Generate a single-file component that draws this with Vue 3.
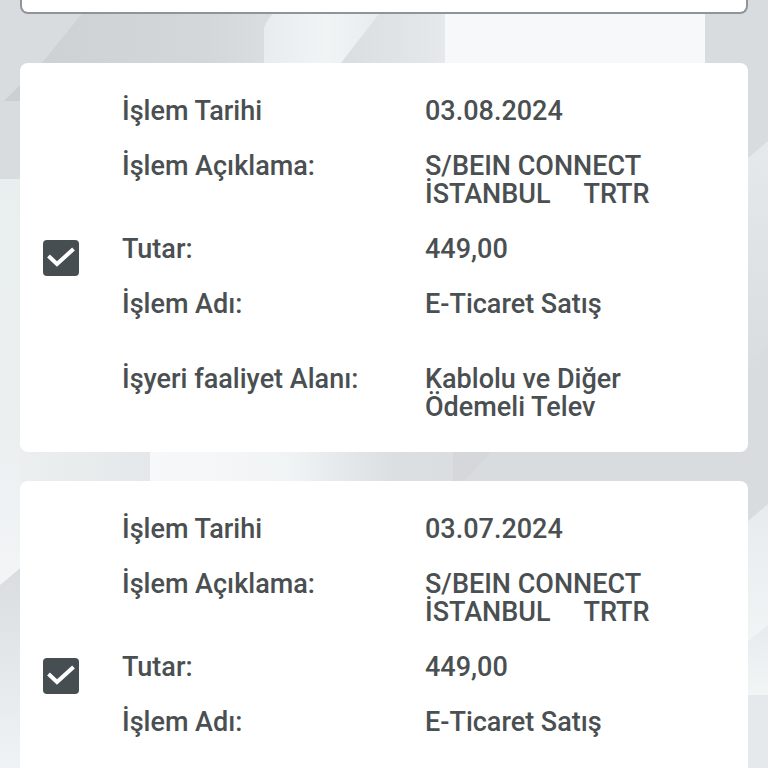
<script setup>
const records = [
  {
    id: 'august',
    rows: [
      { label: 'İşlem Tarihi', value: '03.08.2024' },
      { label: 'İşlem Açıklama:', value: 'S/BEIN CONNECT\nİSTANBUL     TRTR' },
      { label: 'Tutar:', value: '449,00' },
      { label: 'İşlem Adı:', value: 'E-Ticaret Satış' },
      { label: 'İşyeri faaliyet Alanı:', value: 'Kablolu ve Diğer\nÖdemeli Telev', spaced: true },
    ],
  },
  {
    id: 'july',
    rows: [
      { label: 'İşlem Tarihi', value: '03.07.2024' },
      { label: 'İşlem Açıklama:', value: 'S/BEIN CONNECT\nİSTANBUL     TRTR' },
      { label: 'Tutar:', value: '449,00' },
      { label: 'İşlem Adı:', value: 'E-Ticaret Satış' },
    ],
  },
]
</script>

<template>
  <main class="page">
    <svg class="backdrop" viewBox="0 0 768 768" preserveAspectRatio="none" aria-hidden="true">
      <defs>
        <linearGradient id="band" x1="0" x2="1">
          <stop offset="0" stop-color="#cdd1d3" />
          <stop offset="0.75" stop-color="#d3d7d9" />
          <stop offset="1" stop-color="#dadddf" />
        </linearGradient>
        <linearGradient id="fold" x1="0" x2="1">
          <stop offset="0" stop-color="#e9ecef" />
          <stop offset="0.5" stop-color="#f1f4f5" />
          <stop offset="1" stop-color="#e7eaec" />
        </linearGradient>
        <linearGradient id="slope" x1="0" x2="1">
          <stop offset="0" stop-color="#d8dcde" />
          <stop offset="1" stop-color="#e6e9eb" />
        </linearGradient>
        <linearGradient id="left" x1="0" y1="0" x2="0" y2="1">
          <stop offset="0" stop-color="#e9eeef" />
          <stop offset="0.6" stop-color="#ebeff0" />
          <stop offset="1" stop-color="#f3f5f7" />
        </linearGradient>
        <linearGradient id="lower" x1="0" y1="0" x2="0" y2="1">
          <stop offset="0" stop-color="#d8dcdf" />
          <stop offset="1" stop-color="#f0f3f5" />
        </linearGradient>
        <linearGradient id="middle" x1="0" x2="1">
          <stop offset="0" stop-color="#f7f8fa" />
          <stop offset="0.45" stop-color="#f1f4f5" />
          <stop offset="0.8" stop-color="#dcdfe2" />
          <stop offset="1" stop-color="#dbdee1" />
        </linearGradient>
        <linearGradient id="shade" x1="0" x2="1">
          <stop offset="0" stop-color="#ecefef" />
          <stop offset="1" stop-color="#e5e8ea" />
        </linearGradient>
        <linearGradient id="right" x1="0" y1="0" x2="0" y2="1">
          <stop offset="0" stop-color="#e5e9eb" />
          <stop offset="1" stop-color="#d9dcdf" />
        </linearGradient>
        <linearGradient id="rightLower" x1="0" y1="0" x2="0" y2="1">
          <stop offset="0" stop-color="#e7ebed" />
          <stop offset="1" stop-color="#f2f5f6" />
        </linearGradient>
      </defs>
      <rect width="768" height="768" fill="#d9dcde" />
      <path d="M93 0H265V80H28Z" fill="url(#band)" />
      <path d="M264 80V28Q269 13 290 0H390L328 80Z" fill="url(#fold)" />
      <path d="M390 0H445V80H328Z" fill="url(#slope)" />
      <rect x="445" width="260" height="80" fill="#f6f8f9" />
      <path d="M0 105L30 75V101H0Z" fill="#cbcfd1" />
      <rect y="101" width="30" height="78" fill="#d9dcdf" />
      <rect y="179" width="30" height="411" fill="url(#left)" />
      <rect x="20" y="440" width="130" height="50" fill="url(#shade)" />
      <path d="M0 585L30 560V768H0Z" fill="url(#lower)" />
      <rect x="150" y="440" width="303" height="50" fill="url(#middle)" />
      <path d="M453 440H502L454 492H453Z" fill="#d5d7da" />
      <path d="M740 165L768 141V345L740 380Z" fill="url(#right)" />
      <path d="M740 528L768 504V627L740 650Z" fill="url(#rightLower)" />
      <path d="M740 648L768 625V695H740Z" fill="url(#rightLower)" />
      <rect x="740" y="695" width="28" height="73" fill="#e6e9eb" />
    </svg>

    <div class="panel"></div>

    <section v-for="record in records" :key="record.id" class="card">
      <span class="check">
        <input :id="record.id" type="checkbox" checked />
        <svg viewBox="0 0 36 36" aria-hidden="true">
          <path d="M5.5 16L14 24L30.5 9" />
        </svg>
      </span>
      <div class="rows">
        <div
          v-for="(row, index) in record.rows"
          :key="row.label"
          class="row"
          :class="{ spaced: row.spaced }"
        >
          <label v-if="index === 0" :for="record.id">{{ row.label }}</label>
          <span v-else>{{ row.label }}</span>
          <span class="value">{{ row.value }}</span>
        </div>
      </div>
    </section>
  </main>
</template>

<style>
body {
  margin: 0;
}
</style>

<style scoped>
.page {
  position: relative;
  display: flex;
  flex-direction: column;
  box-sizing: border-box;
  height: 100vh;
  padding: 0 20px;
  overflow: hidden;
  color: #4a4f51;
  font-family: Roboto, "Liberation Sans", sans-serif;
  font-size: 27px;
  font-weight: 500;
  line-height: 28px;
}

.backdrop {
  position: absolute;
  inset: 0;
  width: 100%;
  height: 100%;
}

.panel {
  position: relative;
  flex: none;
  box-sizing: border-box;
  height: 14px;
  margin-bottom: 49px;
  border: 2px solid #919496;
  border-top: 0;
  border-radius: 0 0 8px 8px;
  background: #fff;
}

.card {
  position: relative;
  display: grid;
  grid-template-columns: 36px 1fr;
  column-gap: 43px;
  flex: none;
  box-sizing: border-box;
  min-height: 389px;
  margin-bottom: 29px;
  padding: 0 20px 0 23px;
  border-radius: 8px;
  background: #fff;
}

.check {
  display: grid;
  align-self: center;
  width: 36px;
  height: 36px;
}

.check input,
.check svg {
  grid-area: 1 / 1;
  width: 36px;
  height: 36px;
  margin: 0;
}

.check input {
  appearance: none;
  border: 0;
  border-radius: 4px;
  background: #474e51;
}

.check svg {
  z-index: 1;
  fill: none;
  stroke: #fff;
  stroke-width: 4;
  pointer-events: none;
}

.rows {
  display: flex;
  flex-direction: column;
  gap: 27px;
  padding: 34px 0 31px;
}

.row {
  display: grid;
  grid-template-columns: 1fr 1fr;
}

.spaced {
  padding-top: 20px;
}

.value {
  white-space: pre;
}
</style>
